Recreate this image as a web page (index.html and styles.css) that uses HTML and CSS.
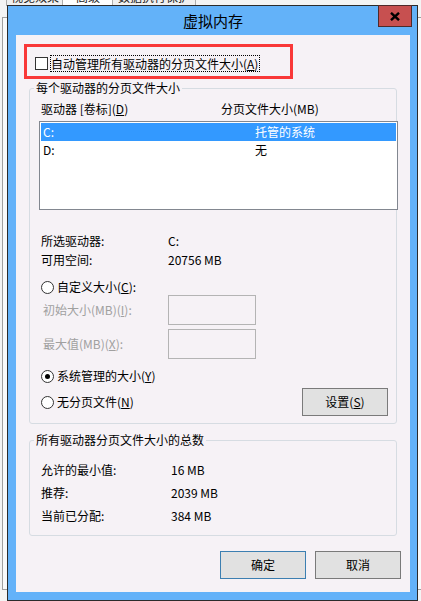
FILE: index.html
```html
<!DOCTYPE html>
<html lang="zh-CN">
<head>
<meta charset="utf-8">
<title>虚拟内存</title>
<link rel="stylesheet" href="styles.css">
</head>
<body>
<div class="parent">
  <div class="tabs">
    <div class="tab t1">视觉效果</div>
    <div class="tab t2 sel">高级</div>
    <div class="tab t3">数据执行保护</div>
  </div>
  <div class="panel"></div>
</div>

<div class="win">
  <div class="titlebar">
    <span class="title">虚拟内存</span>
    <div class="close">
      <svg width="10" height="9" viewBox="0 0 10 9"><path d="M1 0.8 L9 8.2 M9 0.8 L1 8.2" stroke="#000" stroke-width="2.4" fill="none"/></svg>
    </div>
  </div>
  <div class="client">
    <div class="autobox">
      <span class="chk"></span>
      <span class="focus">自动管理所有驱动器的分页文件大小(<u>A</u>)</span>
    </div>

    <div class="group g1">
      <div class="legend">每个驱动器的分页文件大小</div>
      <div class="hdr"><span class="c1">驱动器 [卷标](<u>D</u>)</span><span>分页文件大小(MB)</span></div>
      <div class="list">
        <div class="row sel"><span class="c1">C:</span><span>托管的系统</span></div>
        <div class="row"><span class="c1">D:</span><span>无</span></div>
      </div>
      <div class="info">
        <span>所选驱动器:</span><span>C:</span>
        <span>可用空间:</span><span>20756 MB</span>
      </div>
      <div class="radio-row r1"><span class="radio"></span><span>自定义大小(<u>C</u>):</span></div>
      <div class="field"><span class="lbl">初始大小(MB)(<u>I</u>):</span><span class="edit"></span></div>
      <div class="field f2"><span class="lbl">最大值(MB)(<u>X</u>):</span><span class="edit"></span></div>
      <div class="radio-row r2"><span class="radio on"></span><span>系统管理的大小(<u>Y</u>)</span></div>
      <div class="lastrow">
        <div class="radio-row"><span class="radio"></span><span>无分页文件(<u>N</u>)</span></div>
        <div class="btn">设置(<u>S</u>)</div>
      </div>
    </div>

    <div class="group g2">
      <div class="legend">所有驱动器分页文件大小的总数</div>
      <div class="totals">
        <span>允许的最小值:</span><span>16 MB</span>
        <span>推荐:</span><span>2039 MB</span>
        <span>当前已分配:</span><span>384 MB</span>
      </div>
    </div>

    <div class="actions">
      <div class="btn default">确定</div>
      <div class="btn">取消</div>
    </div>
  </div>
</div>
</body>
</html>
```

FILE: styles.css
```css
* { box-sizing: border-box; }
html, body { margin: 0; padding: 0; }
body {
  width: 421px;
  height: 601px;
  overflow: hidden;
  position: relative;
  background: #f4f4f4;
  font-family: "Noto Sans CJK SC", "Microsoft YaHei", sans-serif;
  font-size: 12px;
  line-height: 16px;
  color: #000;
}
u { text-decoration: underline; text-underline-offset: 1px; }

/* parent dialog behind */
.parent { position: absolute; left: 0; top: 0; width: 421px; height: 601px; }
.tabs { position: absolute; left: 6px; top: -12px; display: flex; height: 18px; }
.tab {
  border: 1px solid #adadad;
  border-bottom: none;
  background: #f0f0f0;
  line-height: 16px;
  padding-left: 4px;
  margin-right: -1px;
  color: #222;
}
.tab.sel { background: #fff; }
.t1 { width: 57px; }
.t2 { width: 51px; padding-left: 13px; }
.t3 { width: 84px; padding-left: 5px; }
.panel {
  position: absolute;
  left: 2px;
  top: 17px;
  width: 440px;
  height: 573px;
  border: 1px solid #a0a0a0;
  background: #fafafa;
}

/* window */
.win {
  position: absolute;
  left: 7px;
  top: 5px;
  width: 411px;
  height: 596px;
  border: 1px solid #2b2b2b;
  background: #63b2f9;
  padding: 0 7px 8px 8px;
  display: flex;
  flex-direction: column;
}
.titlebar {
  position: relative;
  height: 29px;
  margin: 0 -7px 0 -8px;
  display: flex;
  align-items: center;
  justify-content: center;
  font-size: 15px;
  line-height: 18px;
}
.title { padding-left: 1px; }
.close {
  position: absolute;
  right: 5px;
  top: -1px;
  width: 34px;
  height: 22px;
  background: #c75050;
  border: 1px solid #4e2a2a;
  display: flex;
  align-items: center;
  justify-content: center;
}
.close svg { display: block; }

.client {
  flex: 1;
  background: #f6f2f6;
  display: flex;
  flex-direction: column;
  align-items: flex-start;
}

.autobox {
  margin: 9px 0 0 8px;
  width: 269px;
  height: 35px;
  border: 3px solid #f93838;
  display: flex;
  align-items: flex-start;
  padding: 8px 0 0 8px;
}
.chk {
  flex: none;
  width: 13px;
  height: 13px;
  border: 1px solid #333;
  background: #fff;
  margin: 2px 2px 0 0;
}
.focus {
  border: 1px dotted #000;
  height: 17px;
  line-height: 15px;
  padding-right: 1px;
  white-space: nowrap;
}

.group {
  position: relative;
  margin: 9px 0 0 13px;
  width: 368px;
  border: 1px solid #d6dce2;
  border-radius: 3px;
}
.legend {
  position: absolute;
  left: 4px;
  top: -9px;
  padding: 0 2px;
  background: #f6f2f6;
  line-height: 16px;
  white-space: nowrap;
}
.g1 { height: 336px; padding: 12px 8px 7px 11px; }
.hdr { display: flex; white-space: nowrap; }
.hdr .c1 { width: 180px; }
.list {
  margin: 4px 0 0 -2px;
  width: 359px;
  height: 89px;
  border: 1px solid #828790;
  background: #fff;
  padding: 1px;
}
.row { display: flex; height: 18px; line-height: 18px; padding-left: 2px; }
.row .c1 { width: 212px; }
.row.sel { background: #3399ff; color: #fff; }

.info {
  display: grid;
  grid-template-columns: 127px auto;
  row-gap: 3px;
  margin-top: 23px;
}
.radio-row { display: flex; align-items: center; height: 16px; white-space: nowrap; }
.r1 { margin-top: 11px; }
.r2 { margin-top: 9px; }
.radio {
  flex: none;
  width: 13px;
  height: 13px;
  border: 1px solid #333;
  border-radius: 50%;
  background: #fff;
  margin-right: 3px;
  display: flex;
  align-items: center;
  justify-content: center;
}
.radio.on::after {
  content: "";
  width: 5px;
  height: 5px;
  border-radius: 50%;
  background: #000;
}
.field {
  display: flex;
  align-items: center;
  height: 30px;
  padding-left: 2px;
  color: #a0a0a0;
}
.f2 { margin-top: 4px; }
.field .lbl { width: 125px; white-space: nowrap; }
.edit { width: 88px; height: 30px; border: 1px solid #b4b4b4; }
.lastrow {
  display: flex;
  align-items: center;
  justify-content: space-between;
  height: 28px;
  margin-top: 4px;
}
.btn {
  width: 86px;
  height: 28px;
  border: 1px solid #7a7a7a;
  background: #e1e1e1;
  display: flex;
  align-items: center;
  justify-content: center;
}
.btn.default { border-color: #3c7fb1; }

.g2 { margin-top: 16px; height: 96px; padding: 21px 8px 11px 11px; }
.totals {
  display: grid;
  grid-template-columns: 130px auto;
  row-gap: 7px;
}

.actions {
  align-self: stretch;
  display: flex;
  justify-content: flex-end;
  gap: 9px;
  margin-top: 15px;
  padding-right: 9px;
}
```
